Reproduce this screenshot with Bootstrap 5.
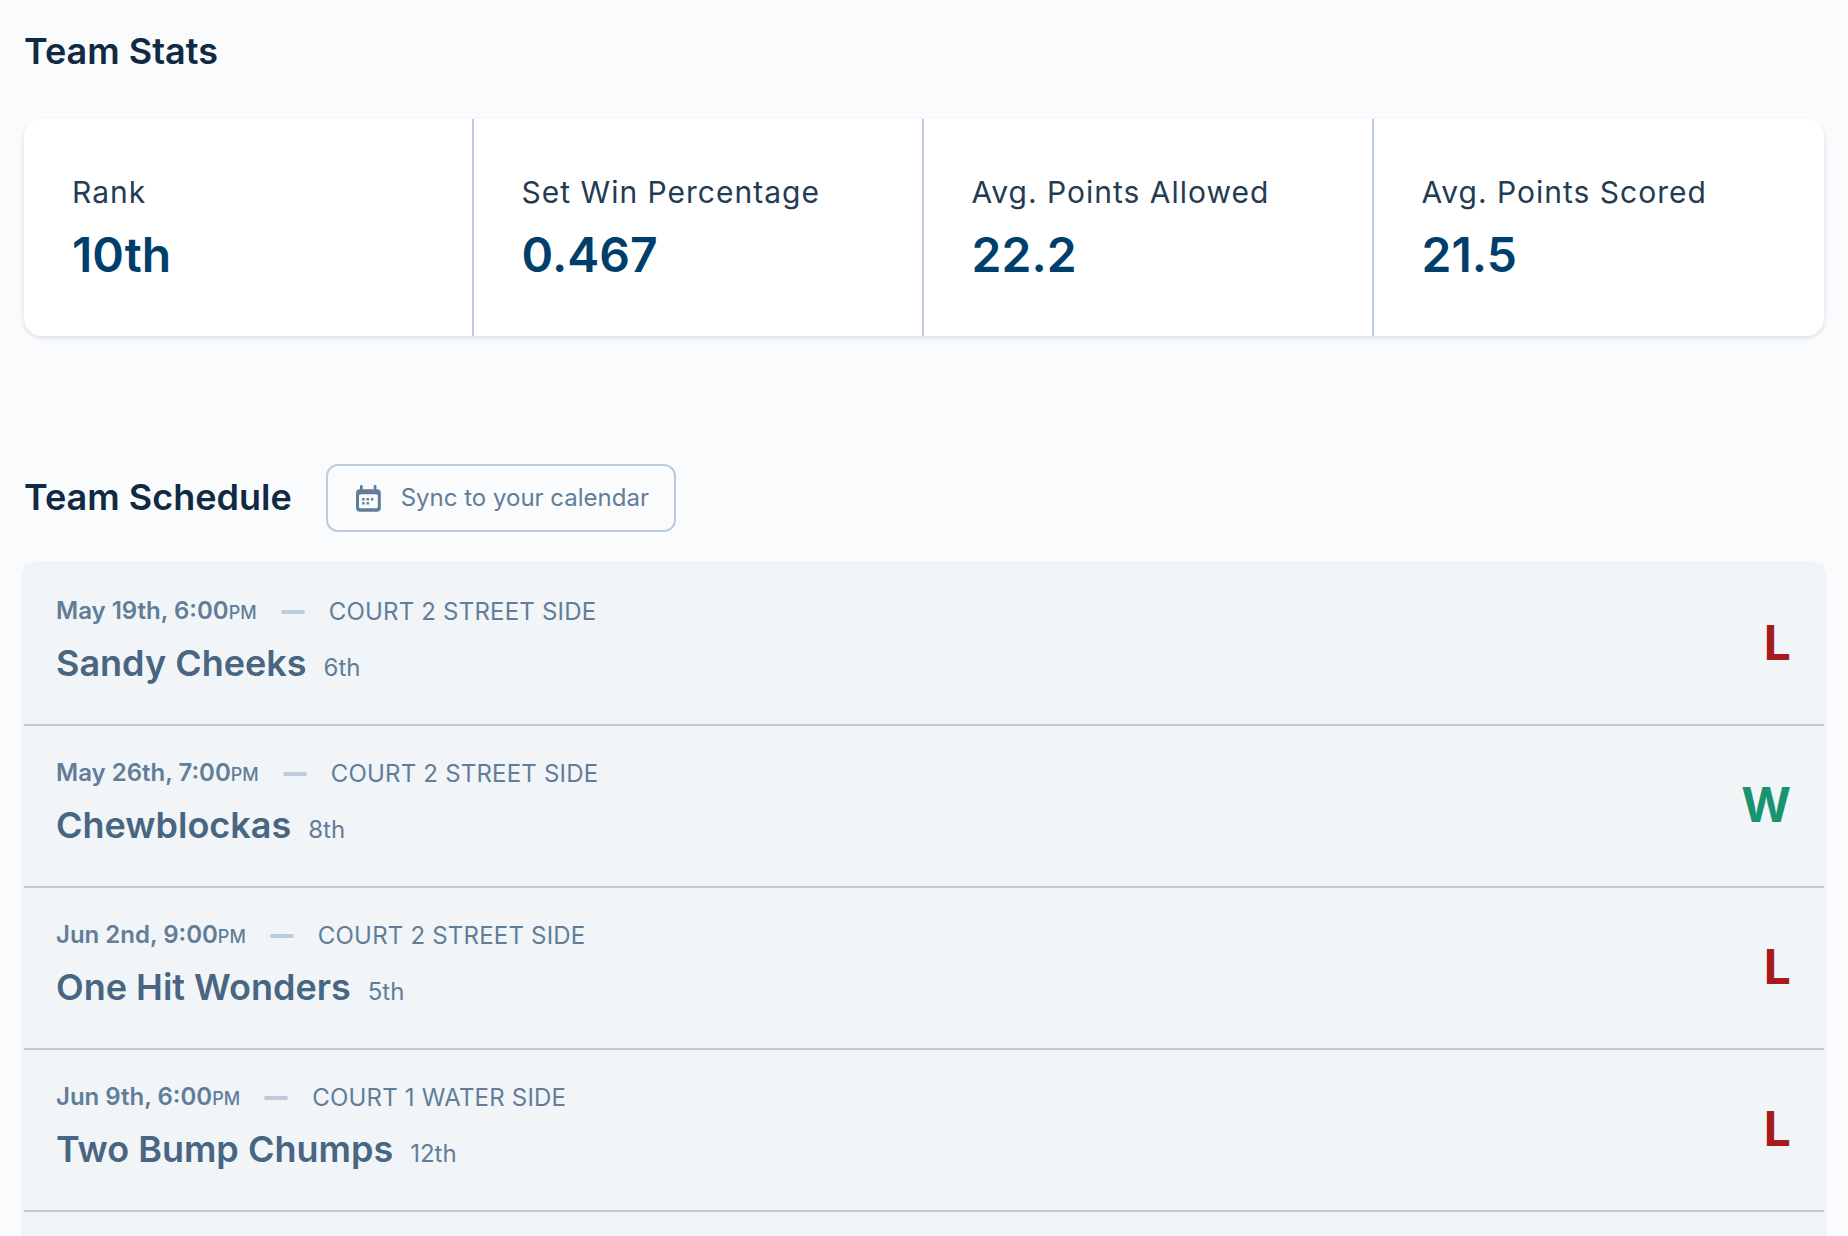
<!doctype html>
<html lang="en"><head><meta charset="utf-8"><title>Team</title>
<link href="https://cdn.jsdelivr.net/npm/bootstrap@5.3.0/dist/css/bootstrap.min.css" rel="stylesheet">
<style>
html,body{height:100%;overflow:hidden}
body{background:#f9fbfd;font-family:Inter,"Liberation Sans",sans-serif;color:#102a43}
.page{padding:24px 24px 0}
.sec-title{font-size:36px;font-weight:600;line-height:54px;margin:0;color:#102a43;white-space:nowrap}
.stats{margin-top:41px;height:217px;border-radius:18px;background:#fff;box-shadow:0 2px 5px rgba(16,42,67,.13);overflow:hidden}
.stat{flex:0 0 450px;padding:55px 48px 0;border-right:2px solid #bcccdc}
.stat:first-child{flex-basis:449.6px}
.stat:last-child{border-right:0;flex:1 1 0}
.stat-label{font-size:30px;line-height:36px;color:#243b53;letter-spacing:1px;white-space:nowrap}
.stat-value{font-size:48px;font-weight:600;line-height:54px;color:#003e6b;margin-top:18px}
.sched-head{margin-top:128px;gap:34px}
.sched-head .sec-title{padding-bottom:2px}
.sync{height:68px;width:350px;border:2px solid #bcccdc;border-radius:12px;color:#627d98;font-size:24px;background:transparent;padding:0 0 0 28px;gap:20px;white-space:nowrap;justify-content:flex-start}
.sched-list{margin-top:32px;border-radius:12px 12px 0 0;background:#f1f5f8;box-shadow:0 0 4px rgba(16,42,67,.12)}
.game{height:162px;border-bottom:2px solid #bcccdc;background:#f1f5f8;padding:29px 33px 0 32px}
.game.tail{height:24px;border-bottom:0}
.meta{font-size:24px;line-height:36px;color:#627d98}
.when{font-weight:600;font-feature-settings:"case"}
.ampm{font-size:18px;font-weight:500;text-transform:uppercase;letter-spacing:0}
.dash{width:24px;height:4px;border-radius:2px;background:#bcccdc;margin:0 24px}
.court{letter-spacing:.2px}
.name{margin-top:8px;align-items:baseline;gap:17px}
.team{font-size:36px;font-weight:600;color:#486581;line-height:48px}
.rank{font-size:24px;color:#627d98}
.res{font-size:48px;font-weight:700;line-height:1;position:relative;top:-16px}
.loss{color:#a61b1b}.win{color:#199473}
</style></head><body>
<main class="page">
<h2 class="sec-title">Team Stats</h2>
<section class="stats d-flex">
<div class="stat"><div class="stat-label">Rank</div><div class="stat-value">10th</div></div>
<div class="stat"><div class="stat-label">Set Win Percentage</div><div class="stat-value">0.467</div></div>
<div class="stat"><div class="stat-label">Avg. Points Allowed</div><div class="stat-value">22.2</div></div>
<div class="stat"><div class="stat-label">Avg. Points Scored</div><div class="stat-value">21.5</div></div>
</section>
<div class="sched-head d-flex align-items-center">
<h2 class="sec-title">Team Schedule</h2>
<button type="button" class="btn sync d-flex align-items-center"><svg width="25" height="27" viewBox="0 0 25 27" aria-hidden="true"><g fill="#627d98"><path fill-rule="evenodd" d="M4 4.300V1.300a1.350 1.350 0 0 1 2.700 0v3h11v-3a1.350 1.350 0 0 1 2.700 0v3H21a3.800 3.800 0 0 1 3.800 3.800v14.800a3.800 3.800 0 0 1-3.800 3.800H3.800A3.800 3.800 0 0 1 0 22.900V8.100a3.800 3.800 0 0 1 3.800-3.800H4ZM4.500 9.300A1.500 1.500 0 0 0 3 10.800v11a1.500 1.500 0 0 0 1.500 1.500h15.800a1.500 1.500 0 0 0 1.500-1.500v-11a1.500 1.500 0 0 0-1.500-1.500H4.500Z"/><rect x="6.100" y="13" width="2.500" height="2.500" rx=".6"/><rect x="10.500" y="13" width="2.500" height="2.500" rx=".6"/><rect x="14.900" y="13" width="2.500" height="2.500" rx=".6"/><rect x="6.100" y="17.100" width="2.500" height="2.500" rx=".6"/><rect x="10.500" y="17.100" width="2.500" height="2.500" rx=".6"/></g></svg><span>Sync to your calendar</span></button>
</div>
<ul class="sched-list list-unstyled mb-0">
<li class="game d-flex justify-content-between align-items-center"><div class="align-self-start"><div class="meta d-flex align-items-center"><span class="when">May 19th, 6:00<span class="ampm">pm</span></span><span class="dash"></span><span class="court">COURT 2 STREET SIDE</span></div><div class="name d-flex"><span class="team">Sandy Cheeks</span><span class="rank">6th</span></div></div><div class="res loss">L</div></li>
<li class="game d-flex justify-content-between align-items-center"><div class="align-self-start"><div class="meta d-flex align-items-center"><span class="when">May 26th, 7:00<span class="ampm">pm</span></span><span class="dash"></span><span class="court">COURT 2 STREET SIDE</span></div><div class="name d-flex"><span class="team">Chewblockas</span><span class="rank">8th</span></div></div><div class="res win">W</div></li>
<li class="game d-flex justify-content-between align-items-center"><div class="align-self-start"><div class="meta d-flex align-items-center"><span class="when">Jun 2nd, 9:00<span class="ampm">pm</span></span><span class="dash"></span><span class="court">COURT 2 STREET SIDE</span></div><div class="name d-flex"><span class="team">One Hit Wonders</span><span class="rank">5th</span></div></div><div class="res loss">L</div></li>
<li class="game d-flex justify-content-between align-items-center"><div class="align-self-start"><div class="meta d-flex align-items-center"><span class="when">Jun 9th, 6:00<span class="ampm">pm</span></span><span class="dash"></span><span class="court">COURT 1 WATER SIDE</span></div><div class="name d-flex"><span class="team">Two Bump Chumps</span><span class="rank">12th</span></div></div><div class="res loss">L</div></li>
<li class="game tail"></li>
</ul>
</main>
<script src="https://cdn.jsdelivr.net/npm/bootstrap@5.3.0/dist/js/bootstrap.bundle.min.js"></script>
</body></html>
